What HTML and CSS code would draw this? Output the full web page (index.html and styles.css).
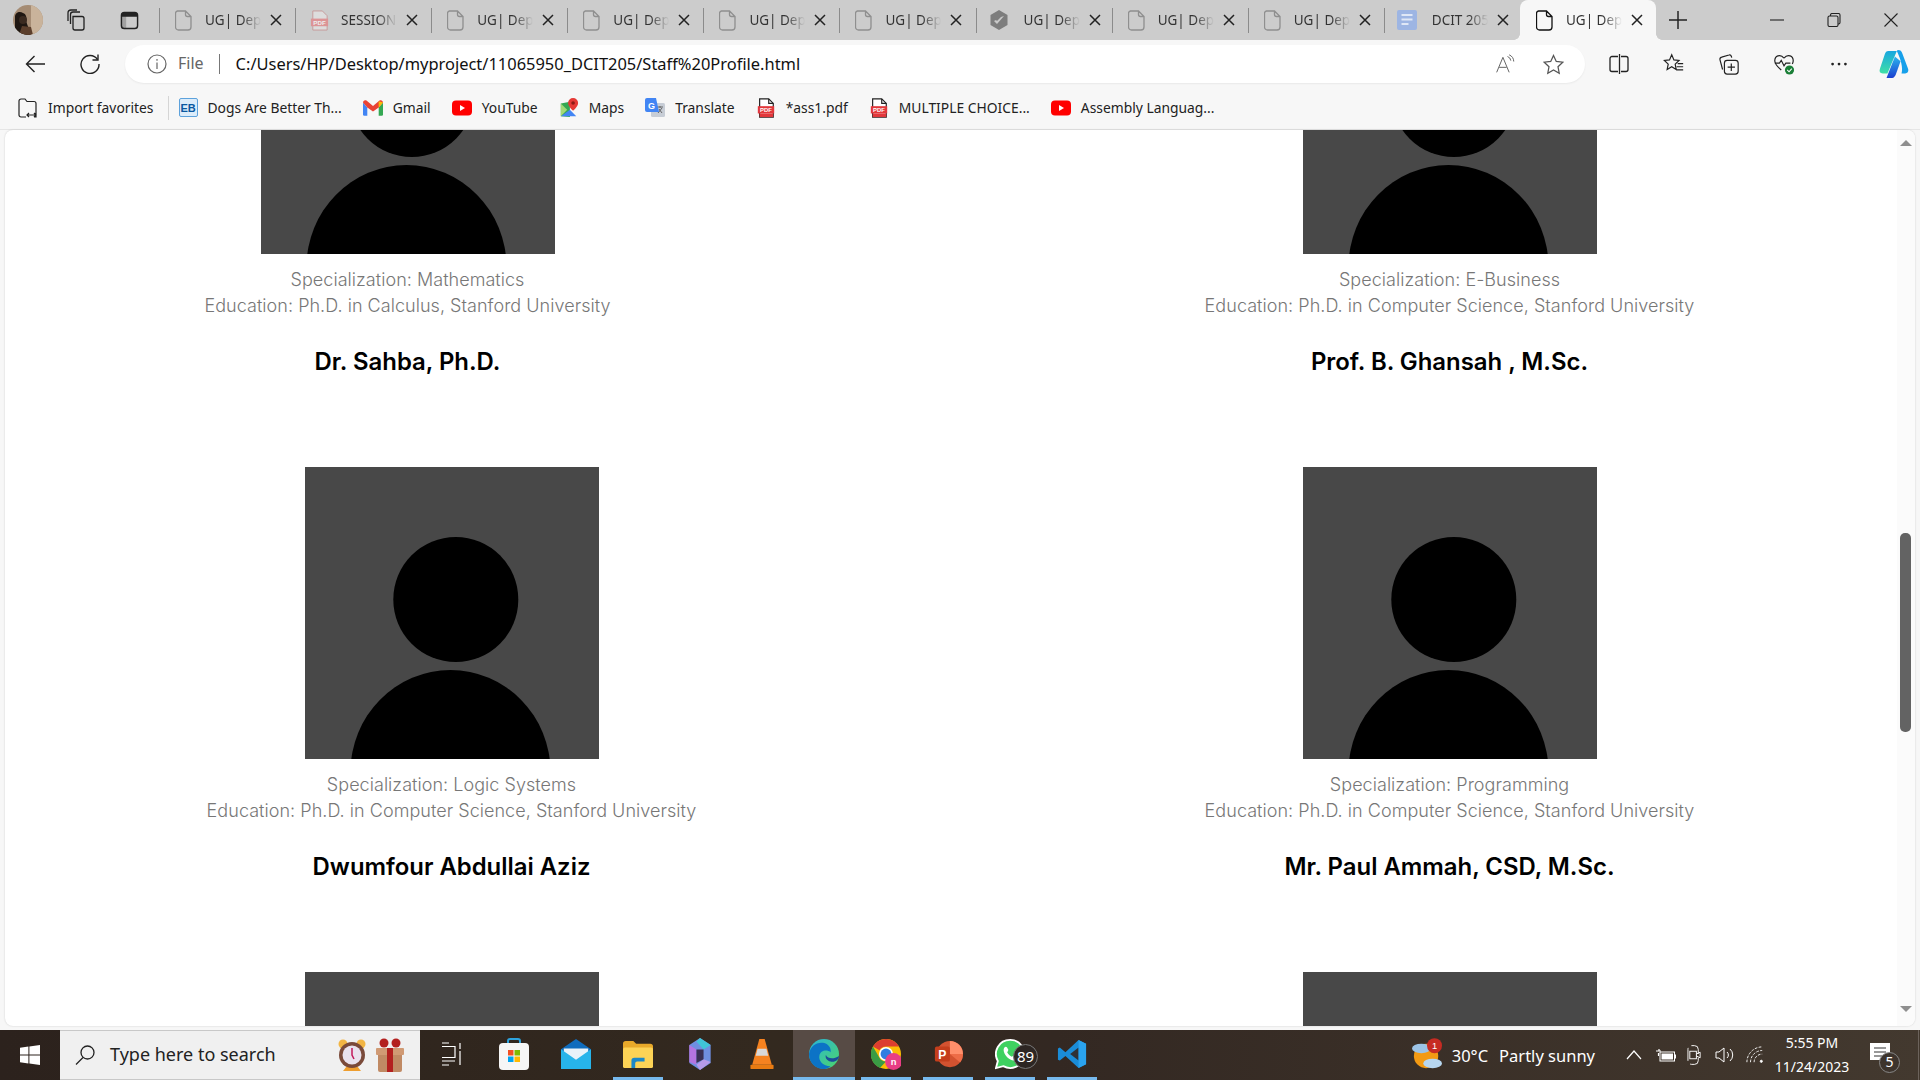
FILE: index.html
```html
<!DOCTYPE html>
<html lang="en">
<head>
<meta charset="utf-8">
<title>UG| Department</title>
<link rel="stylesheet" href="styles.css">
</head>
<body>
<svg class="defs" width="0" height="0" aria-hidden="true">
  <symbol id="doc" viewBox="0 0 17 21"><path d="M2.5 1h8l5.5 5.5V17a3 3 0 0 1-3 3H3.500a3 3 0 0 1-3-3V3.500a2.500 2.500 0 0 1 2-2.500zM10.500 1v3.500a2 2 0 0 0 2 2H16" fill="none" stroke="currentColor" stroke-width="1.300"/></symbol>
  <symbol id="x" viewBox="0 0 12 12"><path d="M1 1l10 10M11 1L1 11" stroke="currentColor" stroke-width="1.500" fill="none"/></symbol>
  <symbol id="pdf" viewBox="0 0 18 22"><path d="M2 1h10l5 5v15H2z" fill="#fff" stroke="#222" stroke-width="1.300"/><path d="M12 1v5h5" fill="none" stroke="#222" stroke-width="1.300"/><rect x="0" y="9" width="18" height="8" fill="#e2373b"/><rect x="2" y="17" width="15" height="4" fill="#e2373b"/><text x="9" y="15.500" font-size="6.500" font-weight="700" text-anchor="middle" fill="#fff" font-family="Liberation Sans">PDF</text></symbol>
  <symbol id="yt" viewBox="0 0 20 15"><rect width="20" height="15" rx="4" fill="#f00"/><path d="M8 4.500v6l5-3z" fill="#fff"/></symbol>
  <symbol id="avatar" viewBox="0 0 294 292"><rect width="294" height="292" fill="#484848"/><circle cx="150.800" cy="132.500" r="62.500" fill="#000"/><ellipse cx="145.500" cy="305" rx="100" ry="102" fill="#000"/></symbol>
</svg>

<header class="tabstrip">
  <svg class="profile" viewBox="0 0 30 30"><defs><clipPath id="pf"><ellipse cx="15" cy="15" rx="15" ry="15"/></clipPath></defs><g clip-path="url(#pf)"><rect width="30" height="30" fill="#a58c74"/><rect x="18" width="12" height="30" fill="#c9b39b"/><path d="M2 30V12c0-5 5-6 8-4 3 1 4 4 3 8l5 14z" fill="#1f1712"/><path d="M6 30l3-9 9 1 2 8z" fill="#5c3f2c"/><circle cx="10" cy="15" r="4" fill="#3a2a20"/></g></svg>
  <svg class="strip-ic" viewBox="0 0 22 22" fill="none" stroke="#222" stroke-width="1.300"><path d="M6 7.500h9a2 2 0 0 1 2 2V19a2 2 0 0 1-2 2H8a2 2 0 0 1-2-2z"/><path d="M3.500 15V5.500a2.500 2.500 0 0 1 2.500-2.500h7M1 12V4a3 3 0 0 1 3-3h6"/></svg>
  <svg class="strip-ic strip-ic-2" viewBox="0 0 20 20"><rect x="1.500" y="1.500" width="17" height="17" rx="3" fill="none" stroke="#222" stroke-width="1.500"/><path d="M1.500 4.500a3 3 0 0 1 3-3h11a3 3 0 0 1 3 3V6h-17z" fill="#222"/><rect x="1.500" y="5" width="5" height="13" fill="#222" opacity=".25"/></svg>
  <div class="tabs">
    <div class="tab"><i class="sep"></i><svg class="tab-ic"><use href="#doc"/></svg><span class="tab-t">UG| Dep</span><svg class="tab-x"><use href="#x"/></svg></div>
    <div class="tab"><i class="sep"></i><svg class="tab-ic tab-ic-pdf" viewBox="0 0 18 22"><path d="M2 1h10l5 5v15H2z" fill="#ddd" stroke="#c79a9a"/><rect x="0" y="9" width="18" height="8" fill="#dc9496"/><text x="9" y="15.500" font-size="6.500" font-weight="700" text-anchor="middle" fill="#eee" font-family="Liberation Sans">PDF</text></svg><span class="tab-t">SESSION</span><svg class="tab-x"><use href="#x"/></svg></div>
    <div class="tab"><i class="sep"></i><svg class="tab-ic"><use href="#doc"/></svg><span class="tab-t">UG| Dep</span><svg class="tab-x"><use href="#x"/></svg></div>
    <div class="tab"><i class="sep"></i><svg class="tab-ic"><use href="#doc"/></svg><span class="tab-t">UG| Dep</span><svg class="tab-x"><use href="#x"/></svg></div>
    <div class="tab"><i class="sep"></i><svg class="tab-ic"><use href="#doc"/></svg><span class="tab-t">UG| Dep</span><svg class="tab-x"><use href="#x"/></svg></div>
    <div class="tab"><i class="sep"></i><svg class="tab-ic"><use href="#doc"/></svg><span class="tab-t">UG| Dep</span><svg class="tab-x"><use href="#x"/></svg></div>
    <div class="tab"><i class="sep"></i><svg class="tab-ic tab-ic-wide" viewBox="0 0 20 20"><path d="M10 0l8.500 5v10L10 20l-8.500-5V5z" fill="#7d7d7d"/><path d="M5 11l3 3 7-8-3 1-4 4-1-1z" fill="#c9c9c9"/></svg><span class="tab-t">UG| Dep</span><svg class="tab-x"><use href="#x"/></svg></div>
    <div class="tab"><i class="sep"></i><svg class="tab-ic"><use href="#doc"/></svg><span class="tab-t">UG| Dep</span><svg class="tab-x"><use href="#x"/></svg></div>
    <div class="tab"><i class="sep"></i><svg class="tab-ic"><use href="#doc"/></svg><span class="tab-t">UG| Dep</span><svg class="tab-x"><use href="#x"/></svg></div>
    <div class="tab"><i class="sep"></i><svg class="tab-ic tab-ic-wide" viewBox="0 0 20 20"><rect width="20" height="20" rx="2" fill="#9db5e3"/><path d="M4.500 5h11M4.500 9.500h11M4.500 14h7" stroke="#dfe7f6" stroke-width="2"/></svg><span class="tab-t">DCIT 205</span><svg class="tab-x"><use href="#x"/></svg></div>
    <div class="tab tab-active"><i class="sep sep-none"></i><svg class="tab-ic"><use href="#doc"/></svg><span class="tab-t">UG| Dep</span><svg class="tab-x"><use href="#x"/></svg></div>
  </div>
  <svg class="newtab" viewBox="0 0 16 16"><path d="M8 0v16M0 8h16" stroke="#222" stroke-width="1.300"/></svg>
  <div class="winctl">
    <svg class="wc" viewBox="0 0 14 14"><path d="M0 7h14" stroke="#222" stroke-width="1.100"/></svg>
    <svg class="wc" viewBox="0 0 14 14" fill="none" stroke="#222" stroke-width="1.100"><rect x="1" y="3" width="10" height="10.500" rx="1.500"/><path d="M3.500 3V2a1.500 1.500 0 0 1 1.500-1.500h6.500A1.500 1.500 0 0 1 13 2v7.500a1.500 1.500 0 0 1-1.500 1.500H11"/></svg>
    <svg class="wc" viewBox="0 0 14 14"><path d="M.5.500l13 13M13.500.500l-13 13" stroke="#222" stroke-width="1.100"/></svg>
  </div>
</header>

<nav class="toolbar">
  <svg class="nav-ic nav-back" viewBox="0 0 20 18" fill="none" stroke="#222" stroke-width="1.400"><path d="M20 9H1.500M9.500 1L1.500 9l8 8"/></svg>
  <svg class="nav-ic nav-reload" viewBox="0 0 20 20" fill="none" stroke="#222" stroke-width="1.400"><path d="M17.500 5.500A9 9 0 1 0 19 10"/><path d="M18 .5v5.500h-5.500"/></svg>
  <div class="addr">
    <svg class="info" viewBox="0 0 20 20" fill="none" stroke="#666" stroke-width="1.200"><circle cx="10" cy="10" r="9"/><path d="M10 8.500V15M10 5v1.800"/></svg>
    <span class="file">File</span>
    <i class="addr-sep"></i>
    <span class="url">C:/Users/HP/Desktop/myproject/11065950_DCIT205/Staff%20Profile.html</span>
    <svg class="read" viewBox="0 0 24 24" fill="none" stroke="#666" stroke-width="1.200"><path d="M2 22L9.500 4 17 22M5 16h9"/><path d="M15 3a6 6 0 0 1 4 5M17 1a9 9 0 0 1 5.500 8"/></svg>
    <svg class="star" viewBox="0 0 22 22" fill="none" stroke="#555" stroke-width="1.300"><path d="M11 1.500l2.900 6.300 6.800.8-5 4.700 1.300 6.800-6-3.400-6 3.400 1.300-6.800-5-4.700 6.800-.8z"/></svg>
  </div>
  <div class="tools">
    <svg class="tool" viewBox="0 0 22 22" fill="none" stroke="#222" stroke-width="1.300"><path d="M10 3.500H4a2 2 0 0 0-2 2v11a2 2 0 0 0 2 2h6M13 3.500h5a2 2 0 0 1 2 2v11a2 2 0 0 1-2 2h-5M11.500 1v20"/></svg>
    <svg class="tool" viewBox="0 0 24 24" fill="none" stroke="#222" stroke-width="1.300"><path d="M9.500 2l2.400 5.600 5.600.6-4.200 3.900 1.100 5.900-4.900-3-5 3 1.200-5.900L1.500 8.200l5.600-.6zM16 11.500h6M15 15h7M14 18.500h8"/></svg>
    <svg class="tool" viewBox="0 0 24 24" fill="none" stroke="#222" stroke-width="1.300"><rect x="7" y="8" width="15" height="15" rx="3"/><path d="M14.500 11.500v8M10.500 15.500h8M15 5l-.5-1.500a2 2 0 0 0-2.500-1.300L4 4.500A2.500 2.500 0 0 0 2.200 7.500L5 18"/></svg>
    <svg class="tool" viewBox="0 0 24 24"><path d="M12 5.500C8 .5 1.500 3 2 9c.3 3.500 4 7 7 9.500M12 5.500C16 .5 22.500 3 22 9c-.1 1-.3 2-1 3" fill="none" stroke="#222" stroke-width="1.300"/><path d="M2 11h5l2-3 3 6 2-3h5" fill="none" stroke="#222" stroke-width="1.200"/><circle cx="18" cy="18.500" r="5" fill="#1a7f37"/><path d="M15.500 18.500l2 2 3-3.500" stroke="#fff" stroke-width="1.200" fill="none"/></svg>
    <svg class="tool" viewBox="0 0 24 24"><circle cx="5" cy="12" r="1.500" fill="#222"/><circle cx="12" cy="12" r="1.500" fill="#222"/><circle cx="19" cy="12" r="1.500" fill="#222"/></svg>
    <svg class="tool tool-copilot" viewBox="0 0 32 32"><defs><linearGradient id="cpa" x1="0" y1="0" x2="0" y2="1"><stop offset="0" stop-color="#17a6e0"/><stop offset="1" stop-color="#3fe0a6"/></linearGradient><linearGradient id="cpb" x1="0" y1="0" x2="0" y2="1"><stop offset="0" stop-color="#2ab4ee"/><stop offset="1" stop-color="#1b3fd0"/></linearGradient></defs><path d="M10 2h9L9 26H4c-3 0-4-2-3-5L6 6c1-3 2-4 4-4z" fill="url(#cpa)"/><path d="M20 1c3 0 4 1 5 4l6 16c1 3-1 5-3 5h-4c2-6-1-16-5-24z" fill="#17a0ea"/><path d="M23 13l-5 14c-1 2-2 4-4 4H8l9-23z" fill="url(#cpb)"/></svg>
  </div>
</nav>

<nav class="bookmarks">
  <a class="bm bm-import"><svg class="bm-ic" viewBox="0 0 20 20" fill="none" stroke="#222" stroke-width="1.200"><path d="M8 19H3a2 2 0 0 1-2-2V3a2 2 0 0 1 2-2h4l2 2.500h7a2 2 0 0 1 2 2V19h-2M9 17h9M11 15l-2 2 2 2M16 15l2 2-2 2"/></svg><span>Import favorites</span></a>
  <i class="bm-sep"></i>
  <a class="bm"><span class="eb">EB</span><span>Dogs Are Better Th...</span></a>
  <a class="bm"><svg class="bm-ic" viewBox="0 0 20 16"><path d="M0 2.500v12a1.300 1.300 0 0 0 1.300 1.300h3V7.500z" fill="#4285f4"/><path d="M20 2.500v12a1.300 1.300 0 0 1-1.300 1.300h-3V7.500z" fill="#34a853"/><path d="M0 2.500C0 .5 2 -.5 3.500.6L10 6l6.500-5.400C18-.5 20 .5 20 2.500L15.700 7.500 10 11.500 4.300 7.500z" fill="#ea4335"/><path d="M15.700 1.300l4.300 1.200-4.300 5z" fill="#fbbc04"/></svg><span>Gmail</span></a>
  <a class="bm"><svg class="bm-ic"><use href="#yt"/></svg><span>YouTube</span></a>
  <a class="bm"><svg class="bm-ic" viewBox="0 0 20 22"><path d="M1 6l10-2v17L1 20z" fill="#34a853"/><path d="M1 20l10-7 7 7z" fill="#4285f4"/><path d="M1 6l7 7-7 7z" fill="#a3d977"/><path d="M14.500 0a5.500 5.500 0 0 0-5.500 5.500c0 4 5.500 8.500 5.500 8.500S20 9.500 20 5.500A5.500 5.500 0 0 0 14.500 0z" fill="#e53935"/><circle cx="14.500" cy="5.500" r="2" fill="#8d1c16"/></svg><span>Maps</span></a>
  <a class="bm"><svg class="bm-ic" viewBox="0 0 20 20"><rect x="6" y="5" width="14" height="14" rx="1.500" fill="#c7cdd6"/><path d="M12 9h6M15 8v2M13 15l4-5M14 11l3 4" stroke="#666" stroke-width="1"/><path d="M2 0h9l3 14H2a2 2 0 0 1-2-2V2a2 2 0 0 1 2-2z" fill="#4285f4"/><text x="6.500" y="10.500" font-size="9" font-weight="700" fill="#fff" text-anchor="middle" font-family="Liberation Sans">G</text></svg><span>Translate</span></a>
  <a class="bm"><svg class="bm-ic"><use href="#pdf"/></svg><span>*ass1.pdf</span></a>
  <a class="bm"><svg class="bm-ic"><use href="#pdf"/></svg><span>MULTIPLE CHOICE...</span></a>
  <a class="bm"><svg class="bm-ic"><use href="#yt"/></svg><span>Assembly Languag...</span></a>
</nav>

<main class="webview">
  <div class="viewport">
    <div class="staff-grid">
      <article class="card card-narrow">
        <svg class="photo"><use href="#avatar"/></svg>
        <p class="meta">Specialization: Mathematics</p>
        <p class="meta">Education: Ph.D. in Calculus, Stanford University</p>
        <h3 class="name">Dr. Sahba, Ph.D.</h3>
      </article>
      <article class="card">
        <svg class="photo"><use href="#avatar"/></svg>
        <p class="meta">Specialization: E-Business</p>
        <p class="meta">Education: Ph.D. in Computer Science, Stanford University</p>
        <h3 class="name">Prof. B. Ghansah , M.Sc.</h3>
      </article>
      <article class="card">
        <svg class="photo"><use href="#avatar"/></svg>
        <p class="meta">Specialization: Logic Systems</p>
        <p class="meta">Education: Ph.D. in Computer Science, Stanford University</p>
        <h3 class="name">Dwumfour Abdullai Aziz</h3>
      </article>
      <article class="card">
        <svg class="photo"><use href="#avatar"/></svg>
        <p class="meta">Specialization: Programming</p>
        <p class="meta">Education: Ph.D. in Computer Science, Stanford University</p>
        <h3 class="name">Mr. Paul Ammah, CSD, M.Sc.</h3>
      </article>
      <article class="card"><svg class="photo"><use href="#avatar"/></svg></article>
      <article class="card"><svg class="photo"><use href="#avatar"/></svg></article>
    </div>
  </div>
  <aside class="scrollbar">
    <i class="arrow arrow-up"></i>
    <i class="thumb"></i>
    <i class="arrow arrow-down"></i>
  </aside>
</main>

<footer class="taskbar">
  <div class="start"><svg viewBox="0 0 20 20" class="win"><path d="M0 2.800l8.400-1.200v8H0zM9.400 1.500L20 0v9.600H9.400zM0 10.500h8.400v8L0 17.300zM9.400 10.500H20V20L9.400 18.500z" fill="#fff"/></svg></div>
  <div class="search">
    <svg class="mag" viewBox="0 0 20 20" fill="none" stroke="#222" stroke-width="1.300"><circle cx="12.500" cy="7.500" r="6.500"/><path d="M8 12.500L1 19.500"/></svg>
    <span class="search-t">Type here to search</span>
    <svg class="clock" viewBox="0 0 28 34"><circle cx="5" cy="6" r="4.500" fill="#f2b544"/><circle cx="23" cy="6" r="4.500" fill="#f2b544"/><path d="M5 33l4-5h10l4 5z" fill="#ee9e2f"/><circle cx="14" cy="17" r="13" fill="#7a4a3a"/><circle cx="14" cy="17" r="9.500" fill="#e9e2ee"/><path d="M14 10v7l2 4" stroke="#c2185b" stroke-width="1.500" fill="none"/></svg>
    <svg class="gift" viewBox="0 0 28 34"><rect x="2" y="10" width="24" height="24" rx="2" fill="#c08a64"/><rect x="0" y="10" width="28" height="7" rx="1" fill="#d09a74"/><rect x="11" y="10" width="6" height="24" fill="#b3201f"/><circle cx="8" cy="5" r="4.500" fill="#b3201f"/><circle cx="20" cy="5" r="4.500" fill="#b3201f"/></svg>
  </div>
  <div class="apps">
    <div class="app"><svg class="app-ic app-tv" viewBox="0 0 20 24" fill="none" stroke="#fff" stroke-width="1.200"><path d="M0 1h7M0 4.500h13v11H0M0 19h13M0 23h7M18 1v6M18 9v14"/></svg></div>
    <div class="app"><svg class="app-ic" viewBox="0 0 30 32"><path d="M9 7V3a2 2 0 0 1 2-2h8a2 2 0 0 1 2 2v4" fill="none" stroke="#2ea3dd" stroke-width="2"/><rect y="5" width="30" height="27" rx="4" fill="#f6f6f6"/><rect x="9" y="12" width="5.500" height="5.500" fill="#f25022"/><rect x="15.500" y="12" width="5.500" height="5.500" fill="#7fba00"/><rect x="9" y="18.500" width="5.500" height="5.500" fill="#00a4ef"/><rect x="15.500" y="18.500" width="5.500" height="5.500" fill="#ffb900"/></svg></div>
    <div class="app"><svg class="app-ic" viewBox="0 0 32 32"><path d="M0 11L16 0l16 11v21H0z" fill="#0f6cbd"/><path d="M3 10h26v12L16 27 3 22z" fill="#e8f2f9"/><path d="M0 11l16 11 16-11v21H0z" fill="#27b4ea"/></svg></div>
    <div class="app app-on"><svg class="app-ic" viewBox="0 0 32 30"><path d="M0 4a3 3 0 0 1 3-3h8l3 3h15a3 3 0 0 1 3 3v20a3 3 0 0 1-3 3H3a3 3 0 0 1-3-3z" fill="#e8a92a"/><rect y="8" width="32" height="22" rx="2" fill="#fcd356"/><path d="M9 30v-8a3 3 0 0 1 3-3h11v4h-8a2 2 0 0 0-2 2v5z" fill="#1c88c7"/></svg></div>
    <div class="app"><svg class="app-ic" viewBox="0 0 26 36"><path d="M13 0l12 8v20l-12 8-12-8V8z" fill="#6f8fe0"/><path d="M1 8l8 5v17l-8-3z" fill="#b474e0"/><path d="M25 8l-8 5-8-9 4-4z" fill="#40c5d8"/><path d="M9 30l8-6 8 3-12 9z" fill="#b69ae8"/><path d="M9 13l8 0v11l-8 4z" fill="#3a3054"/></svg></div>
    <div class="app"><svg class="app-ic" viewBox="0 0 26 36"><path d="M10 1h6l8 29H2z" fill="#f58220"/><path d="M8 12h10l2 8H6z" fill="#d8d8d8"/><rect y="30" width="26" height="5" rx="1" fill="#e97b12"/></svg></div>
    <div class="app app-active"><svg class="app-ic" viewBox="0 0 32 32"><defs><linearGradient id="ega" x1="0" y1="0" x2="1" y2="1"><stop offset="0" stop-color="#2ab3d8"/><stop offset="1" stop-color="#4cd66a"/></linearGradient></defs><circle cx="16" cy="16" r="16" fill="url(#ega)"/><path d="M0 16C1 8 8 3 15 4c6 1 9 6 8 10-4-3-11-2-12 4-1 5 4 11 12 11-2 2-5 3-8 3C7 32 0 25 0 16z" fill="#0c73c6"/><path d="M32 18c0 4-4 7-9 6-4-1-6-4-5-7 2 4 8 5 14 1z" fill="#1a4d9a"/></svg></div>
    <div class="app app-on"><svg class="app-ic app-chrome" viewBox="0 0 32 32"><circle cx="16" cy="16" r="16" fill="#fbbc04"/><path d="M16 0a16 16 0 0 1 13.900 8H16a8 8 0 0 0-7 4L2.100 8A16 16 0 0 1 16 0z" fill="#dc3d30"/><path d="M2.100 8L9 20a8 8 0 0 0 7 4l-6.500 7A16 16 0 0 1 2.100 8z" fill="#3a9c44"/><circle cx="16" cy="16" r="7.500" fill="#fff"/><circle cx="16" cy="16" r="5.800" fill="#2f7de1"/><circle cx="24" cy="24" r="9" fill="#e83e85"/><text x="24" y="27.500" font-size="10" fill="#fff" text-anchor="middle" font-family="Liberation Sans" font-weight="700">n</text></svg></div>
    <div class="app app-on"><svg class="app-ic" viewBox="0 0 32 32"><circle cx="18" cy="16" r="14" fill="#d35230"/><path d="M18 2a14 14 0 0 1 14 14H18z" fill="#ff8f6b"/><path d="M18 16h14a14 14 0 0 1-3 9z" fill="#ed6c47"/><rect x="2" y="8" width="16" height="16" rx="2" fill="#c43e1c"/><text x="10" y="21" font-size="13" font-weight="700" fill="#fff" text-anchor="middle" font-family="Liberation Sans">P</text></svg></div>
    <div class="app app-on app-wa"><svg class="app-ic" viewBox="0 0 32 32"><path d="M16 1a15 15 0 0 0-13 22.500L1 31l7.800-2A15 15 0 1 0 16 1z" fill="#3fd160" stroke="#fff" stroke-width="2"/><path d="M10 9c2-2 3 0 4 2 .5 1 0 2-1 3 1 2 3 4 5 5 1-1 2-1.500 3-1 2 1 4 2 2 4-3 2-7 .5-10-2.500S8 12 10 9z" fill="#fff"/></svg><span class="wa-badge">89</span></div>
    <div class="app app-on"><svg class="app-ic" viewBox="0 0 32 32"><path d="M23 1l8 4v22l-8 4-14-13-6 5-2-1V10l2-1 6 5z" fill="#1a8cd8"/><path d="M23 9v14l-9-7z" fill="#2f3136"/><path d="M23 1l8 4v22l-8 4z" fill="#2aa3ef"/></svg></div>
  </div>
  <div class="tray">
    <div class="weather"><svg class="wx" viewBox="0 0 32 36"><circle cx="15" cy="19" r="13" fill="#f39a13"/><ellipse cx="10" cy="11" rx="10" ry="5" fill="#9cc3e6"/><ellipse cx="22" cy="27" rx="10" ry="5" fill="#b7d6f0"/><circle cx="24" cy="8" r="8" fill="#c62b22"/><text x="24" y="11.500" font-size="10" fill="#fff" text-anchor="middle" font-family="Liberation Sans">1</text></svg><span class="wx-t">30°C</span><span class="wx-t wx-d">Partly sunny</span></div>
    <svg class="tr-ic tr-chev" viewBox="0 0 16 10" fill="none" stroke="#fff" stroke-width="1.200"><path d="M1 9l7-8 7 8"/></svg>
    <svg class="tr-ic tr-bat" viewBox="0 0 20 14"><path d="M3 1v2M0 3h5M2.500 5v3" stroke="#fff" stroke-width="1.200"/><rect x="4" y="4" width="14.500" height="9" fill="none" stroke="#fff"/><rect x="5.500" y="5.500" width="11.500" height="6" fill="#fff"/><rect x="19" y="6.500" width="1" height="4" fill="#fff"/></svg>
    <svg class="tr-ic tr-vid" viewBox="0 0 16 22" fill="none" stroke="#fff" stroke-width="1"><rect x="1" y="1" width="11" height="20" rx="4" stroke-dasharray="14 4"/><rect x="3" y="7" width="7" height="8"/><path d="M10 10l4-2v6l-4-2"/></svg>
    <svg class="tr-ic tr-vol" viewBox="0 0 20 20" fill="none" stroke="#fff" stroke-width="1"><path d="M1 7v6h3l5 4V3L4 7zM12 7a4 4 0 0 1 0 6M15 4a8 8 0 0 1 0 12"/></svg>
    <svg class="tr-ic tr-wifi" viewBox="0 0 20 20" fill="none" stroke="#fff" stroke-width="1"><path d="M1 18A17 17 0 0 1 18 1M5 18A13 13 0 0 1 18 5M9 18a9 9 0 0 1 9-9" stroke-dasharray="3 1.500"/><circle cx="17" cy="17" r="1.200" fill="#fff"/></svg>
    <div class="clocktext"><span>5:55 PM</span><span>11/24/2023</span></div>
    <div class="notif"><svg class="notif-ic" viewBox="0 0 20 20"><path d="M0 0h20v17H0z" fill="#fff"/><path d="M4 5h12M4 9h12M4 13h8" stroke="#333" stroke-width="1.200"/></svg><span class="notif-b">5</span></div>
  </div>
  <i class="desk"></i>
</footer>
</body>
</html>
```

FILE: styles.css
```css
* { box-sizing: border-box; }
html, body { margin: 0; height: 100%; }
body {
  width: 1920px;
  height: 1080px;
  overflow: hidden;
  display: flex;
  flex-direction: column;
  background: #f7f7f7;
  font-family: "Noto Sans", "Open Sans", sans-serif;
  color: #1c1c1c;
}
.defs { position: absolute; }

/* tab strip */
.tabstrip { height: 40px; flex: none; background: #cccccc; display: flex; align-items: center; }
.profile { width: 30px; height: 30px; margin-left: 13px; flex: none; }
.strip-ic { width: 22px; height: 22px; margin-left: 24px; flex: none; }
.strip-ic-2 { width: 19px; height: 19px; margin-left: 31px; }
.tabs { display: flex; margin-left: 20px; height: 40px; }
.tab { width: 136.100px; height: 40px; display: flex; align-items: center; color: #222; flex: none; position: relative; }
.tab-active { background: #f7f7f7; border-radius: 8px 8px 0 0; }
.tab-active::before, .tab-active::after {
  content: ""; position: absolute; bottom: 0; width: 6px; height: 6px;
}
.tab-active::before { left: -6px; background: radial-gradient(circle at 0 0, #cccccc 5.500px, #f7f7f7 6px); }
.tab-active::after { right: -6px; background: radial-gradient(circle at 100% 0, #cccccc 5.500px, #f7f7f7 6px); }
.sep { width: 1px; height: 25px; background: #8b8b8b; flex: none; }
.sep-none { background: transparent; }
.tab-ic { width: 17px; height: 21px; margin-left: 15px; flex: none; color: #8f8f8f; }
.tab-active .tab-ic { color: #111; }
.tab-ic-pdf { width: 19px; height: 21px; margin-left: 14px; margin-right: -1px; }
.tab-ic-wide { width: 20px; height: 20px; margin-left: 12px; margin-right: 2px; }
.tab-t {
  width: 56px; margin-left: 13px; overflow: hidden; white-space: nowrap; font-size: 13.500px; color: #333;
  -webkit-mask-image: linear-gradient(90deg, #000 65%, transparent);
  mask-image: linear-gradient(90deg, #000 65%, transparent);
}
.tab-x { width: 12px; height: 12px; margin-left: 9px; flex: none; color: #222; }
.newtab { width: 18px; height: 18px; margin-left: 13px; flex: none; }
.winctl { display: flex; margin-left: auto; margin-right: 22px; gap: 43px; align-items: center; }
.wc { width: 14px; height: 14px; }

/* toolbar */
.toolbar { height: 49px; flex: none; padding-top: 5px; display: flex; align-items: flex-start; background: #f7f7f7; }
.nav-ic { flex: none; margin-top: 9px; width: 20px; height: 20px; }
.nav-back { margin-left: 25px; }
.nav-reload { margin-left: 35px; }
.addr {
  width: 1460px; height: 38px; margin-left: 25px; background: #fff; border-radius: 19px;
  display: flex; align-items: center; padding-left: 22px; box-shadow: 0 1px 2px rgba(0,0,0,.06);
}
.info { width: 20px; height: 20px; flex: none; }
.file { margin: 0 0 2px 11px; font-size: 16px; color: #666; }
.addr-sep { width: 1px; height: 20px; background: #777; margin-left: 15px; }
.url { margin: 0 0 2px 16px; font-size: 16.450px; color: #111; white-space: nowrap; }
.read { width: 20px; height: 20px; margin-left: auto; flex: none; }
.star { width: 21px; height: 21px; margin-left: 28px; margin-right: 21px; flex: none; }
.tools { display: flex; margin-left: 23px; align-items: center; height: 38px; }
.tool { width: 22px; height: 22px; margin-right: 33px; flex: none; }
.tool-copilot { width: 30px; height: 30px; margin-right: 0; margin-left: -4px; }

/* bookmarks */
.bookmarks {
  height: 41px; flex: none; display: flex; align-items: center; padding: 0 0 3px 18px;
  background: #f7f7f7; border-bottom: 1px solid #e6e6e6; font-size: 13.850px; color: #222; gap: 21px;
}
.bm { display: flex; align-items: center; gap: 10px; white-space: nowrap; }
.bm-ic { width: 20px; height: 20px; flex: none; }
.bm-sep { width: 1px; height: 24px; background: #d5d5d5; margin-left: -7px; margin-right: -8px; }
.eb {
  width: 19px; height: 19px; flex: none; margin-left: -3px; background: #dcecfa; border: 1px solid #5da2dc; border-radius: 2px;
  color: #0a58a0; font: 700 11px "Liberation Sans", sans-serif; display: flex; align-items: center; justify-content: center;
}

/* page */
.webview {
  height: 896px; margin: 0 5px; flex: none; display: flex; background: #fff;
  border-radius: 8px; overflow: hidden; box-shadow: 0 0 2px rgba(0,0,0,.18);
}
.viewport { flex: 1; overflow: hidden; padding-left: 201px; }
.staff-grid { margin-top: -168px; display: grid; grid-template-columns: 998px 1fr; grid-auto-rows: 505px; }
.card { width: 491px; display: flex; flex-direction: column; align-items: center; font-family: Inter, "Noto Sans", sans-serif; }
.card-narrow { width: 403px; }
.photo { width: 294px; height: 292px; flex: none; display: block; margin-bottom: 13px; }
.meta { margin: 0; font-size: 18px; line-height: 26px; font-weight: 300; letter-spacing: .04px; color: #777; white-space: nowrap; }
.name { margin: 28px 0 0; font-size: 23.900px; line-height: 30px; font-weight: 600; color: #000; white-space: nowrap; }
.scrollbar { width: 18px; flex: none; background: #fbfbfb; display: flex; flex-direction: column; align-items: center; padding: 10px 4px 10px 3px; }
.arrow { width: 0; height: 0; border-left: 6px solid transparent; border-right: 6px solid transparent; flex: none; }
.arrow-up { border-bottom: 6px solid #8f8f8f; }
.arrow-down { border-top: 6px solid #8f8f8f; margin-top: 274px; }
.thumb { width: 11px; height: 199px; background: #636363; border-radius: 5px; margin-top: 387px; flex: none; }

/* taskbar */
.taskbar {
  height: 50px; margin-top: 4px; flex: none; display: flex; align-items: stretch; position: relative;
  background: linear-gradient(90deg, #2c221d 0%, #33291f 40%, #332822 55%, #43392f 100%);
  color: #fff;
}
.start { width: 60px; display: flex; align-items: center; justify-content: center; }
.win { width: 20px; height: 20px; }
.search {
  width: 360px; background: #f0f0f0; border-top: 1px solid #c8c8c8; border-bottom: 1px solid #c8c8c8;
  display: flex; align-items: center; padding-left: 15px; color: #222;
}
.mag { width: 20px; height: 20px; flex: none; }
.search-t { margin: 0 0 2px 15px; font-size: 18px; color: #222; white-space: nowrap; }
.clock { width: 28px; height: 34px; margin-left: auto; flex: none; }
.gift { width: 28px; height: 34px; margin-left: 10px; margin-right: 16px; flex: none; }
.apps { display: flex; margin-left: 1px; }
.app {
  width: 50px; margin: 0 6px; display: flex; align-items: center; justify-content: center; position: relative;
  border-bottom: 3px solid transparent;
}
.app-on { border-bottom-color: #76b9ed; }
.app-active { width: 62px; margin: 0; background: #574b45; border-bottom-color: #76b9ed; }
.app-ic { width: 30px; height: 32px; flex: none; }
.app-tv { width: 20px; height: 24px; }
.wa-badge {
  position: absolute; left: 28px; top: 14px; width: 25px; height: 25px; border-radius: 50%;
  background: #2d2623; border: 1px solid #777; font-size: 15px; line-height: 22px; text-align: center; color: #fff;
}
.tray { margin-left: auto; display: flex; align-items: center; }
.weather { display: flex; align-items: center; }
.wx { width: 30px; height: 34px; flex: none; }
.wx-t { margin-left: 10px; font-size: 16.500px; white-space: nowrap; }
.wx-d { margin-left: 11px; }
.tr-ic { flex: none; }
.tr-chev { width: 16px; height: 10px; margin-left: 31px; }
.tr-bat { width: 20px; height: 14px; margin-left: 14px; }
.tr-vid { width: 15px; height: 22px; margin-left: 11px; }
.tr-vol { width: 20px; height: 20px; margin-left: 13px; }
.tr-wifi { width: 18px; height: 18px; margin-left: 11px; }
.clocktext { width: 78px; margin-left: 9px; display: flex; flex-direction: column; align-items: center; font-size: 14px; line-height: 24px; white-space: nowrap; }
.notif { width: 32px; height: 34px; margin-left: 19px; margin-right: 16px; position: relative; }
.notif-ic { width: 20px; height: 20px; position: absolute; left: 0; top: 5px; }
.notif-b {
  position: absolute; left: 9px; top: 14px; width: 21px; height: 21px; border-radius: 50%;
  background: #3d342d; border: 1px solid #888; font-size: 14px; line-height: 18px; text-align: center;
}
.desk { width: 1px; background: #6b625b; margin-right: 1px; flex: none; }
```
